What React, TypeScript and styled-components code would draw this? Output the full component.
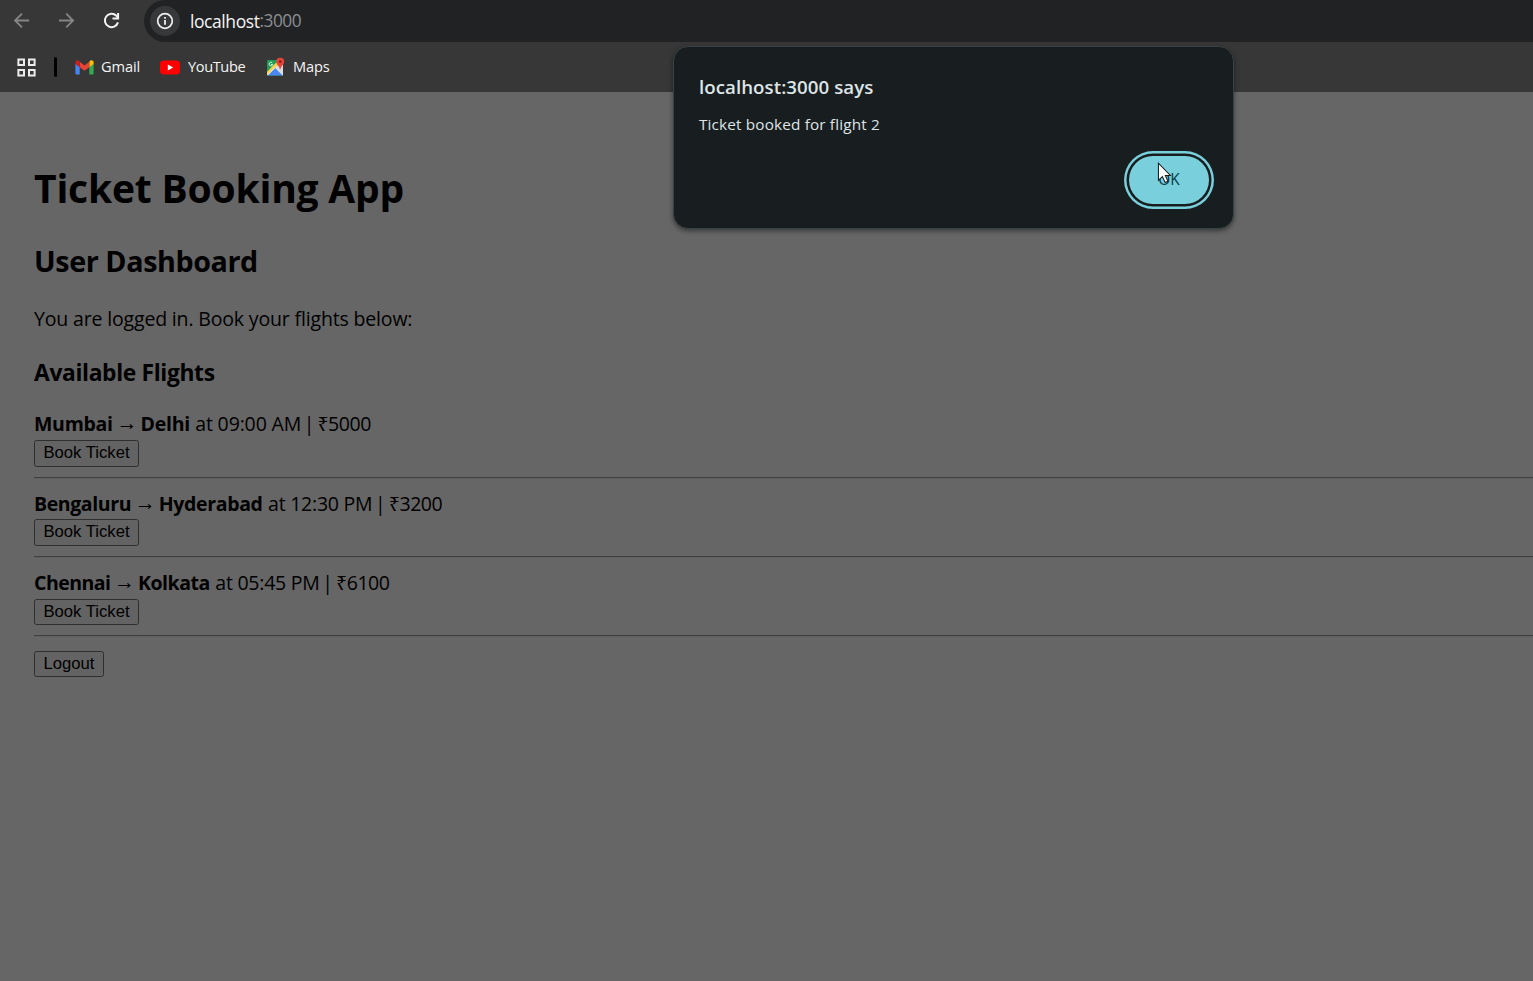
import React from 'react';
import styled, { createGlobalStyle } from 'styled-components';

const GlobalStyle = createGlobalStyle`
  * { box-sizing: border-box; }
  html, body { margin: 0; padding: 0; background: #666666; overflow: hidden; }
  body { font-family: 'Open Sans', 'Noto Sans', sans-serif; color: #000; }
`;

const Window = styled.div`
  position: relative;
  width: 1533px;
  height: 981px;
  overflow: hidden;
  display: flex;
  flex-direction: column;
`;

const Chrome = styled.header`
  height: 92px;
  flex: none;
  background: #373737;
  display: flex;
  flex-direction: column;
`;

const NavRow = styled.div`
  height: 42px;
  display: flex;
  align-items: center;
`;

const NavButtons = styled.div`
  width: 144px;
  height: 42px;
  display: flex;
  padding-left: 10px;
  gap: 21px;
  align-items: center;
  svg { display: block; }
`;

const AddressBar = styled.div`
  flex: 1;
  height: 42px;
  background: #202224;
  border-radius: 21px 0 0 21px;
  display: flex;
  align-items: center;
  padding-left: 6px;
`;

const InfoChip = styled.span`
  width: 30px;
  height: 30px;
  border-radius: 50%;
  background: #37383a;
  display: flex;
  align-items: center;
  justify-content: center;
  margin-right: 10px;
`;

const Host = styled.span`
  font-size: 17.5px;
  line-height: 42px;
  letter-spacing: -0.42px;
  color: #f4f4f4;
`;

const Port = styled.span`
  font-size: 17.3px;
  line-height: 42px;
  letter-spacing: -0.52px;
  color: #8d8f91;
`;

const BookmarksRow = styled.nav`
  height: 50px;
  display: flex;
  align-items: center;
  padding-left: 17px;
  svg { display: block; flex: none; }
`;

const Divider = styled.i`
  width: 3px;
  height: 20px;
  border-radius: 1.5px;
  background: #000;
  margin: 0 18px 0 18px;
`;

const Bookmark = styled.a<{ $width: number; $gap?: number }>`
  display: flex;
  align-items: center;
  width: ${(p) => p.$width}px;
  gap: ${(p) => p.$gap ?? 7}px;
  color: #f4f4f4;
  font-size: 14.6px;
  line-height: 20px;
  white-space: nowrap;
`;

const BookmarkLabel = styled.span<{ $tracking: number }>`
  letter-spacing: ${(p) => p.$tracking}px;
  padding-bottom: 2px;
`;

const Page = styled.main`
  flex: 1;
  padding: 69px 0 0 34px;
  display: flex;
  flex-direction: column;
  align-items: stretch;
`;

const Title = styled.h1`
  margin: 0;
  font-size: 39px;
  line-height: 54px;
  letter-spacing: -0.19px;
`;

const Subtitle = styled.h2`
  margin: 26px 0 0;
  font-size: 28.7px;
  line-height: 40px;
  letter-spacing: -0.4px;
`;

const Intro = styled.p`
  margin: 24px 0 0;
  font-size: 19.5px;
  line-height: 28px;
  letter-spacing: -0.16px;
`;

const SectionTitle = styled.h3`
  margin: 24px 0 0;
  font-size: 22.8px;
  line-height: 32px;
  letter-spacing: -0.34px;
`;

const FlightList = styled.section`
  margin-top: 21.3px;
  display: flex;
  flex-direction: column;
`;

const Flight = styled.article`
  height: 79.3px;
  display: flex;
  flex-direction: column;
  align-items: flex-start;
`;

const Route = styled.div`
  display: flex;
  height: 29.8px;
  line-height: 28px;
  font-size: 19.5px;
  white-space: pre;
`;

const City = styled.strong<{ $width: number; $tracking: number }>`
  width: ${(p) => p.$width}px;
  letter-spacing: ${(p) => p.$tracking}px;
`;

const Arrow = styled.span`
  width: 27px;
  display: flex;
  justify-content: center;
  font-size: 21px;
  line-height: 24px;
`;

const Time = styled.span<{ $width: number; $tracking: number }>`
  margin-left: 5.5px;
  width: ${(p) => p.$width}px;
  letter-spacing: ${(p) => p.$tracking}px;
`;

const Pipe = styled.span`
  width: 5px;
  margin-right: 5.8px;
  display: flex;
  justify-content: center;
`;

const Price = styled.span`
  letter-spacing: -0.45px;
`;

const Button = styled.button<{ $width: number }>`
  width: ${(p) => p.$width}px;
  height: 26.5px;
  flex: none;
  display: block;
  padding: 0 0 2px;
  border: 1px solid #2f2f2f;
  border-radius: 2.5px;
  background: #636363;
  color: #000;
  font: 16.67px/23px 'Liberation Sans', Arial, sans-serif;
  white-space: nowrap;
`;

const Rule = styled.hr`
  align-self: stretch;
  margin: 10px 0 0;
  border: 0;
  height: 2px;
  border-top: 1px solid #3f3f3f;
  border-bottom: 1px solid #606060;
`;

const LogoutRow = styled.div`
  margin-top: 2.6px;
`;

const Dialog = styled.section`
  position: absolute;
  left: 673px;
  top: 46px;
  width: 561px;
  height: 183px;
  border-radius: 15px;
  border: 1px solid #394244;
  background: #181d1f;
  box-shadow: 0 2px 5px rgba(0, 0, 0, 0.45);
  padding: 26px 19px 0 25px;
  display: flex;
  flex-direction: column;
`;

const DialogTitle = styled.h4`
  margin: 0;
  color: #dfe4e6;
  font-size: 18.7px;
  font-weight: 600;
  line-height: 28px;
  letter-spacing: 0.05px;
`;

const DialogText = styled.p`
  margin: 12px 0 0;
  color: #dfe3e4;
  font-size: 15.3px;
  line-height: 22px;
  letter-spacing: 0.16px;
`;

const FocusRing = styled.div`
  align-self: flex-end;
  margin-top: 16px;
  width: 90px;
  height: 58px;
  flex: none;
  box-shadow: inset 0 0 0 2.5px #7acfdc;
  border-radius: 29px;
  padding: 5px;
  display: flex;
`;

const OkButton = styled.button`
  flex: 1;
  border: 0;
  border-radius: 24px;
  background: #7acfdc;
  color: #073a46;
  font: 500 15.4px/22px 'Open Sans', sans-serif;
  padding: 0;
`;

const Pointer = styled.svg`
  position: absolute;
  left: 1157px;
  top: 162px;
`;

const BackIcon = () => (
  <svg width="24" height="24" viewBox="0 0 24 24" fill="none" stroke="#858585" strokeWidth="1.9">
    <path d="M19.2 11.5H5.4M12 4.6 5.1 11.5l6.9 6.9" />
  </svg>
);

const ForwardIcon = () => (
  <svg width="24" height="24" viewBox="0 0 24 24" fill="none" stroke="#858585" strokeWidth="1.9">
    <path d="M4 11.5h13.8M11.2 4.6l6.9 6.9-6.9 6.9" />
  </svg>
);

const ReloadIcon = () => (
  <svg width="24" height="24" viewBox="0 0 24 24" fill="none" stroke="#f2f2f2" strokeWidth="2">
    <path d="M18 13.4A6.7 6.7 0 1 1 16.4 6.8l1.6 1.9" />
    <path d="M18.1 4v5.4h-5.6" />
  </svg>
);

const InfoIcon = () => (
  <svg width="18" height="18" viewBox="0 0 18 18" fill="none" stroke="#f0f0f0">
    <circle cx="9" cy="9" r="7.3" strokeWidth="1.7" />
    <path d="M9 8v4.8M9 5v1.8" strokeWidth="1.8" />
  </svg>
);

const AppsIcon = () => (
  <svg width="19" height="19" viewBox="0 0 19 19" fill="none" stroke="#ededed" strokeWidth="2">
    <path d="M1.4 1.4h5.6v5.6H1.4zM12 1.4h5.6v5.6H12zM1.4 12h5.6v5.6H1.4zM12 12h5.6v5.6H12z" />
  </svg>
);

const GmailIcon = () => (
  <svg width="19" height="15" viewBox="0 0 19 15">
    <path d="M.4 3.5v9.9c0 .7.5 1.2 1.2 1.2h3.1V6.8z" fill="#4285f4" />
    <path d="M14.3 6.8v7.8h3.1c.7 0 1.2-.5 1.2-1.2V3.5z" fill="#34a853" />
    <path d="M14.3 1.8v5.4l4.3-3.3V2.3c0-2-2.2-2.6-3.5-1.6z" fill="#fbbc04" />
    <path d="M4.7 7.2V1.8l4.8 3.6 4.8-3.6v5.4l-4.8 3.6z" fill="#ea4335" />
    <path d="M.4 2.3v1.6l4.3 3.3V1.8L3.9.7C2.6-.3.4.3.4 2.3z" fill="#c5221f" />
  </svg>
);

const YouTubeIcon = () => (
  <svg width="20" height="15" viewBox="0 0 20 15">
    <rect y=".4" width="20" height="14.2" rx="4" fill="#f00" />
    <path d="M7.8 4.4v6.2l5.4-3.1z" fill="#fff" />
  </svg>
);

const MapsIcon = () => (
  <svg width="20" height="20" viewBox="0 0 20 20">
    <rect x="1" y="3" width="16" height="15.5" rx="1.3" fill="#1f9d57" />
    <path d="M9.2 10.2 17 18.2V6.5L13.5 6z" fill="#d9dde0" />
    <path d="M1.4 18.1 9.2 10.4l7.6 7.8-.9.3H2.3z" fill="#4b87f2" />
    <path d="M1 14.8 12.3 3.4l2.1 2L1.6 18.2 1 17.3z" fill="#fbd24c" />
    <path d="m1.5 18.2 7.7-7.7 7.8 7.8" fill="none" stroke="#f5f5f5" strokeWidth="1" />
    <path d="M6.3 5.9A1.8 1.8 0 1 0 6.7 7.5H5" fill="none" stroke="#d9f2e3" strokeWidth="1" />
    <path d="M14.2 .7a4 4 0 0 0-4 4c0 3 3.2 3.7 3.5 7.3h1c.3-3.6 3.5-4.3 3.5-7.3a4 4 0 0 0-4-4z" fill="#e5443a" />
    <circle cx="14.2" cy="4.7" r="1.4" fill="#8c1d18" />
  </svg>
);

type FlightInfo = {
  from: string; fromWidth: number; fromTracking: number;
  to: string; toWidth: number; toTracking: number;
  time: string; timeWidth: number; timeTracking: number; price: string;
};

const flights: FlightInfo[] = [
  { from: 'Mumbai', fromWidth: 79.5, fromTracking: -0.28, to: 'Delhi', toWidth: 49.2, toTracking: -0.25, time: 'at 09:00 AM', timeWidth: 111.4, timeTracking: -0.14, price: '₹5000' },
  { from: 'Bengaluru', fromWidth: 97.7, fromTracking: -0.4, to: 'Hyderabad', toWidth: 103.9, toTracking: -0.34, time: 'at 12:30 PM', timeWidth: 109.9, timeTracking: -0.24, price: '₹3200' },
  { from: 'Chennai', fromWidth: 77, fromTracking: -0.54, to: 'Kolkata', toWidth: 71.8, toTracking: -0.46, time: 'at 05:45 PM', timeWidth: 109.9, timeTracking: -0.24, price: '₹6100' },
];

export default function App() {
  return (
    <Window>
      <GlobalStyle />
      <Chrome>
        <NavRow>
          <NavButtons>
            <BackIcon />
            <ForwardIcon />
            <ReloadIcon />
          </NavButtons>
          <AddressBar>
            <InfoChip><InfoIcon /></InfoChip>
            <Host>localhost</Host>
            <Port>:3000</Port>
          </AddressBar>
        </NavRow>
        <BookmarksRow>
          <AppsIcon />
          <Divider />
          <Bookmark $width={85}><GmailIcon /><BookmarkLabel $tracking={-0.1}>Gmail</BookmarkLabel></Bookmark>
          <Bookmark $width={106} $gap={8}><YouTubeIcon /><BookmarkLabel $tracking={-0.4}>YouTube</BookmarkLabel></Bookmark>
          <Bookmark $width={70}><MapsIcon /><BookmarkLabel $tracking={-0.15}>Maps</BookmarkLabel></Bookmark>
        </BookmarksRow>
      </Chrome>
      <Page>
        <Title>Ticket Booking App</Title>
        <Subtitle>User Dashboard</Subtitle>
        <Intro>You are logged in. Book your flights below:</Intro>
        <SectionTitle>Available Flights</SectionTitle>
        <FlightList>
          {flights.map((f) => (
            <Flight key={f.from}>
              <Route>
                <City $width={f.fromWidth} $tracking={f.fromTracking}>{f.from}</City>
                <Arrow>→</Arrow>
                <City $width={f.toWidth} $tracking={f.toTracking}>{f.to}</City>
                <Time $width={f.timeWidth} $tracking={f.timeTracking}>{f.time}</Time>
                <Pipe>|</Pipe>
                <Price>{f.price}</Price>
              </Route>
              <Button $width={105}>Book Ticket</Button>
              <Rule />
            </Flight>
          ))}
        </FlightList>
        <LogoutRow>
          <Button $width={70}>Logout</Button>
        </LogoutRow>
      </Page>
      <Dialog role="alertdialog">
        <DialogTitle>localhost:3000 says</DialogTitle>
        <DialogText>Ticket booked for flight 2</DialogText>
        <FocusRing>
          <OkButton>OK</OkButton>
        </FocusRing>
      </Dialog>
      <Pointer width="15" height="23" viewBox="0 0 14 22">
        <path d="M1.2 1.2v16.3l3.8-3.6 2.6 5.7 2.7-1.2-2.5-5.5h4.8z" fill="#fff" stroke="#1a1a1a" strokeWidth="1" />
      </Pointer>
    </Window>
  );
}
